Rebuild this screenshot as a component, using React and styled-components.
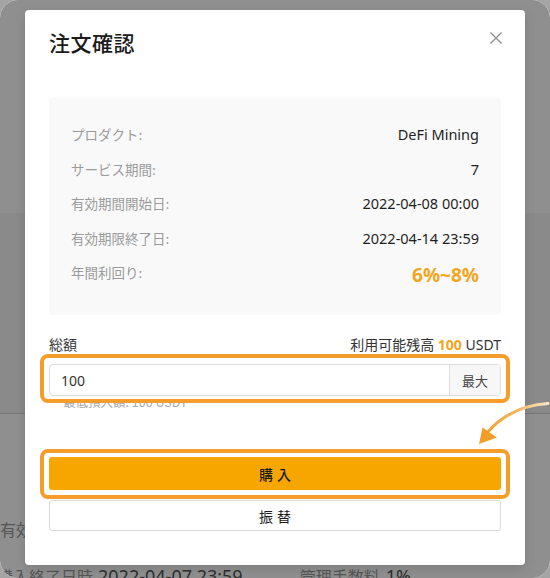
import React from "react";
import styled, { createGlobalStyle } from "styled-components";

const GlobalStyle = createGlobalStyle`
  html, body { margin: 0; padding: 0; background: #a4a4a4; }
  body { font-family: "Noto Sans", "Noto Sans CJK JP", sans-serif; }
  * { box-sizing: border-box; }
`;

const Frame = styled.div`
  position: relative;
  width: 550px;
  height: 578px;
  overflow: hidden;
  border-radius: 18px;
  background: #fff;
`;

const BgPage = styled.div`
  display: flex;
  flex-direction: column;
  height: 100%;
`;

const BgTop = styled.div`
  height: 213px;
  flex-shrink: 0;
  background: #fff;
`;

const BgMid = styled.div`
  height: 201px;
  flex-shrink: 0;
  background: #f6f6f6;
  border-bottom: 1px solid #d6d6d6;
`;

const BgLower = styled.div`
  flex: 1;
  background: #fff;
  display: flex;
  flex-direction: column;
  padding-top: 104px;
`;

const BgRow = styled.div`
  display: flex;
  align-items: center;
  flex-shrink: 0;
  height: ${(p) => p.$h}px;
  margin-top: ${(p) => p.$mt || 0}px;
  margin-left: ${(p) => p.$ml || 0}px;
  font-family: "Noto Sans CJK JP", sans-serif;
  white-space: nowrap;
`;

const BgLabel = styled.span`
  font-size: 16px;
  color: #9a9a9a;
  margin-right: ${(p) => p.$mr || 8}px;
`;

const BgValue = styled.span`
  font-family: "Noto Sans", sans-serif;
  font-size: 18px;
  color: #555;
  margin-right: ${(p) => p.$mr || 0}px;
`;

const Overlay = styled.div`
  position: absolute;
  inset: 0;
  background: rgba(0, 0, 0, 0.44);
`;

const Modal = styled.div`
  position: absolute;
  left: 25px;
  top: 10px;
  width: 500px;
  background: #fff;
  border-radius: 4px;
  padding: 20px 24px 34px;
  display: flex;
  flex-direction: column;
  box-shadow: 0 4px 12px rgba(0, 0, 0, 0.12);
`;

const Title = styled.h2`
  margin: 0;
  height: 24px;
  line-height: 24px;
  font-family: "Noto Sans CJK JP", sans-serif;
  font-size: 21px;
  font-weight: 500;
  color: #1b1b1b;
  letter-spacing: 0.5px;
`;

const Close = styled.button`
  position: absolute;
  right: 22px;
  top: 21px;
  width: 14px;
  height: 14px;
  padding: 0;
  border: 0;
  background: transparent;
  display: flex;
`;

const InfoBox = styled.div`
  margin-top: 44px;
  background: #f9f9f9;
  border-radius: 4px;
  padding: 26px 22px 27px;
  display: flex;
  flex-direction: column;
  gap: 14.5px;
`;

const InfoRow = styled.div`
  display: flex;
  justify-content: space-between;
  align-items: flex-start;
`;

const InfoLabel = styled.span`
  font-family: "Noto Sans CJK JP", sans-serif;
  font-size: 13.5px;
  line-height: 20px;
  color: #9b9b9b;
`;

const InfoValue = styled.span`
  font-size: ${(p) => (p.$big ? 19 : 14.5)}px;
  line-height: ${(p) => (p.$big ? 26 : 20)}px;
  font-weight: ${(p) => (p.$big ? 700 : 400)};
  color: ${(p) => (p.$big ? "#f3a51d" : "#1f1f1f")};
`;

const AmountRow = styled.div`
  margin-top: 20px;
  height: 18px;
  display: flex;
  justify-content: space-between;
  align-items: center;
  font-family: "Noto Sans", "Noto Sans CJK JP", sans-serif;
  font-size: 14px;
  color: #333;
`;

const Accent = styled.span`
  color: #f3a51d;
  font-weight: 700;
`;

const Highlight = styled.div`
  margin: ${(p) => p.$mt || 0}px -9px 0;
  border: 4px solid #f49d2b;
  border-radius: 8px;
  padding: ${(p) => p.$pad};
`;

const InputWrap = styled.div`
  display: flex;
  height: 32px;
  border: 1px solid #dcdcdc;
  border-radius: 4px;
  overflow: hidden;
`;

const InputText = styled.div`
  flex: 1;
  display: flex;
  align-items: center;
  padding-left: 11px;
  font-size: 14px;
  color: #333;
`;

const MaxButton = styled.div`
  width: 51px;
  display: flex;
  align-items: center;
  justify-content: center;
  background: #f7f7f7;
  border-left: 1px solid #dcdcdc;
  font-family: "Noto Sans CJK JP", sans-serif;
  font-size: 13px;
  color: #444;
`;

const MinNoteClip = styled.div`
  height: 8px;
  overflow: hidden;
  position: relative;
`;

const MinNote = styled.div`
  position: absolute;
  left: 14px;
  bottom: 1px;
  font-family: "Noto Sans CJK JP", sans-serif;
  font-size: 12.5px;
  line-height: 16px;
  color: #a8a8a8;
  white-space: nowrap;
`;

const Button = styled.button`
  width: 100%;
  height: ${(p) => p.$h}px;
  margin-top: ${(p) => p.$mt || 0}px;
  border-radius: 3px;
  border: ${(p) => (p.$primary ? "0" : "1px solid #dadada")};
  background: ${(p) => (p.$primary ? "#f7a600" : "#fff")};
  color: #1b1b1b;
  font-family: "Noto Sans CJK JP", sans-serif;
  font-size: 14px;
  font-weight: ${(p) => (p.$primary ? 500 : 400)};
  letter-spacing: 4px;
  padding: 0 0 0 4px;
  display: flex;
  align-items: center;
  justify-content: center;
`;

const ArrowSvg = styled.svg`
  position: absolute;
  left: 0;
  top: 0;
  pointer-events: none;
`;

const rows = [
  ["プロダクト:", "DeFi Mining"],
  ["サービス期間:", "7"],
  ["有効期間開始日:", "2022-04-08 00:00"],
  ["有効期限終了日:", "2022-04-14 23:59"],
];

export default function App() {
  return (
    <>
      <GlobalStyle />
      <Frame>
        <BgPage>
          <BgTop />
          <BgMid />
          <BgLower>
            <BgRow $h={22}>
              <BgLabel>有効期間</BgLabel>
            </BgRow>
            <BgRow $h={24} $ml={-3} $mt={24}>
              <BgLabel $mr={5}>購入終了日時</BgLabel>
              <BgValue $mr={57}>2022-04-07 23:59</BgValue>
              <BgLabel $mr={6}>管理手数料</BgLabel>
              <BgValue>1%</BgValue>
            </BgRow>
          </BgLower>
        </BgPage>
        <Overlay />
        <Modal>
          <Title>注文確認</Title>
          <Close aria-label="close">
            <svg width="14" height="14" viewBox="0 0 14 14">
              <path d="M1.5 1.5 L12.5 12.5 M12.5 1.5 L1.5 12.5" stroke="#8e8e8e" strokeWidth="1.3" fill="none" />
            </svg>
          </Close>
          <InfoBox>
            {rows.map(([l, v]) => (
              <InfoRow key={l}>
                <InfoLabel>{l}</InfoLabel>
                <InfoValue>{v}</InfoValue>
              </InfoRow>
            ))}
            <InfoRow>
              <InfoLabel>年間利回り:</InfoLabel>
              <InfoValue $big>6%~8%</InfoValue>
            </InfoRow>
          </InfoBox>
          <AmountRow>
            <span>総額</span>
            <span>
              利用可能残高 <Accent>100</Accent> USDT
            </span>
          </AmountRow>
          <Highlight $mt={1} $pad="6px 5px 3px">
            <InputWrap>
              <InputText>100</InputText>
              <MaxButton>最大</MaxButton>
            </InputWrap>
          </Highlight>
          <MinNoteClip>
            <MinNote>最低預入額: 100 USDT</MinNote>
          </MinNoteClip>
          <Highlight $mt={38} $pad="4px 5px 5px">
            <Button $primary $h={33}>購入</Button>
          </Highlight>
          <Button $h={31} $mt={1}>振替</Button>
        </Modal>
        <ArrowSvg width="550" height="578" viewBox="0 0 550 578">
          <defs>
            <linearGradient id="arrowGrad" x1="482" y1="0" x2="548" y2="0" gradientUnits="userSpaceOnUse">
              <stop offset="0" stopColor="#f49d2b" />
              <stop offset="0.55" stopColor="#f7b866" />
              <stop offset="1" stopColor="#fde6c8" />
            </linearGradient>
          </defs>
          <path d="M548 403.5 Q510 406 487 433" stroke="url(#arrowGrad)" strokeWidth="3" fill="none" strokeLinecap="round" />
          <polygon points="479,444 482.5,427.5 497,437.5" fill="#f49d2b" />
        </ArrowSvg>
      </Frame>
    </>
  );
}
